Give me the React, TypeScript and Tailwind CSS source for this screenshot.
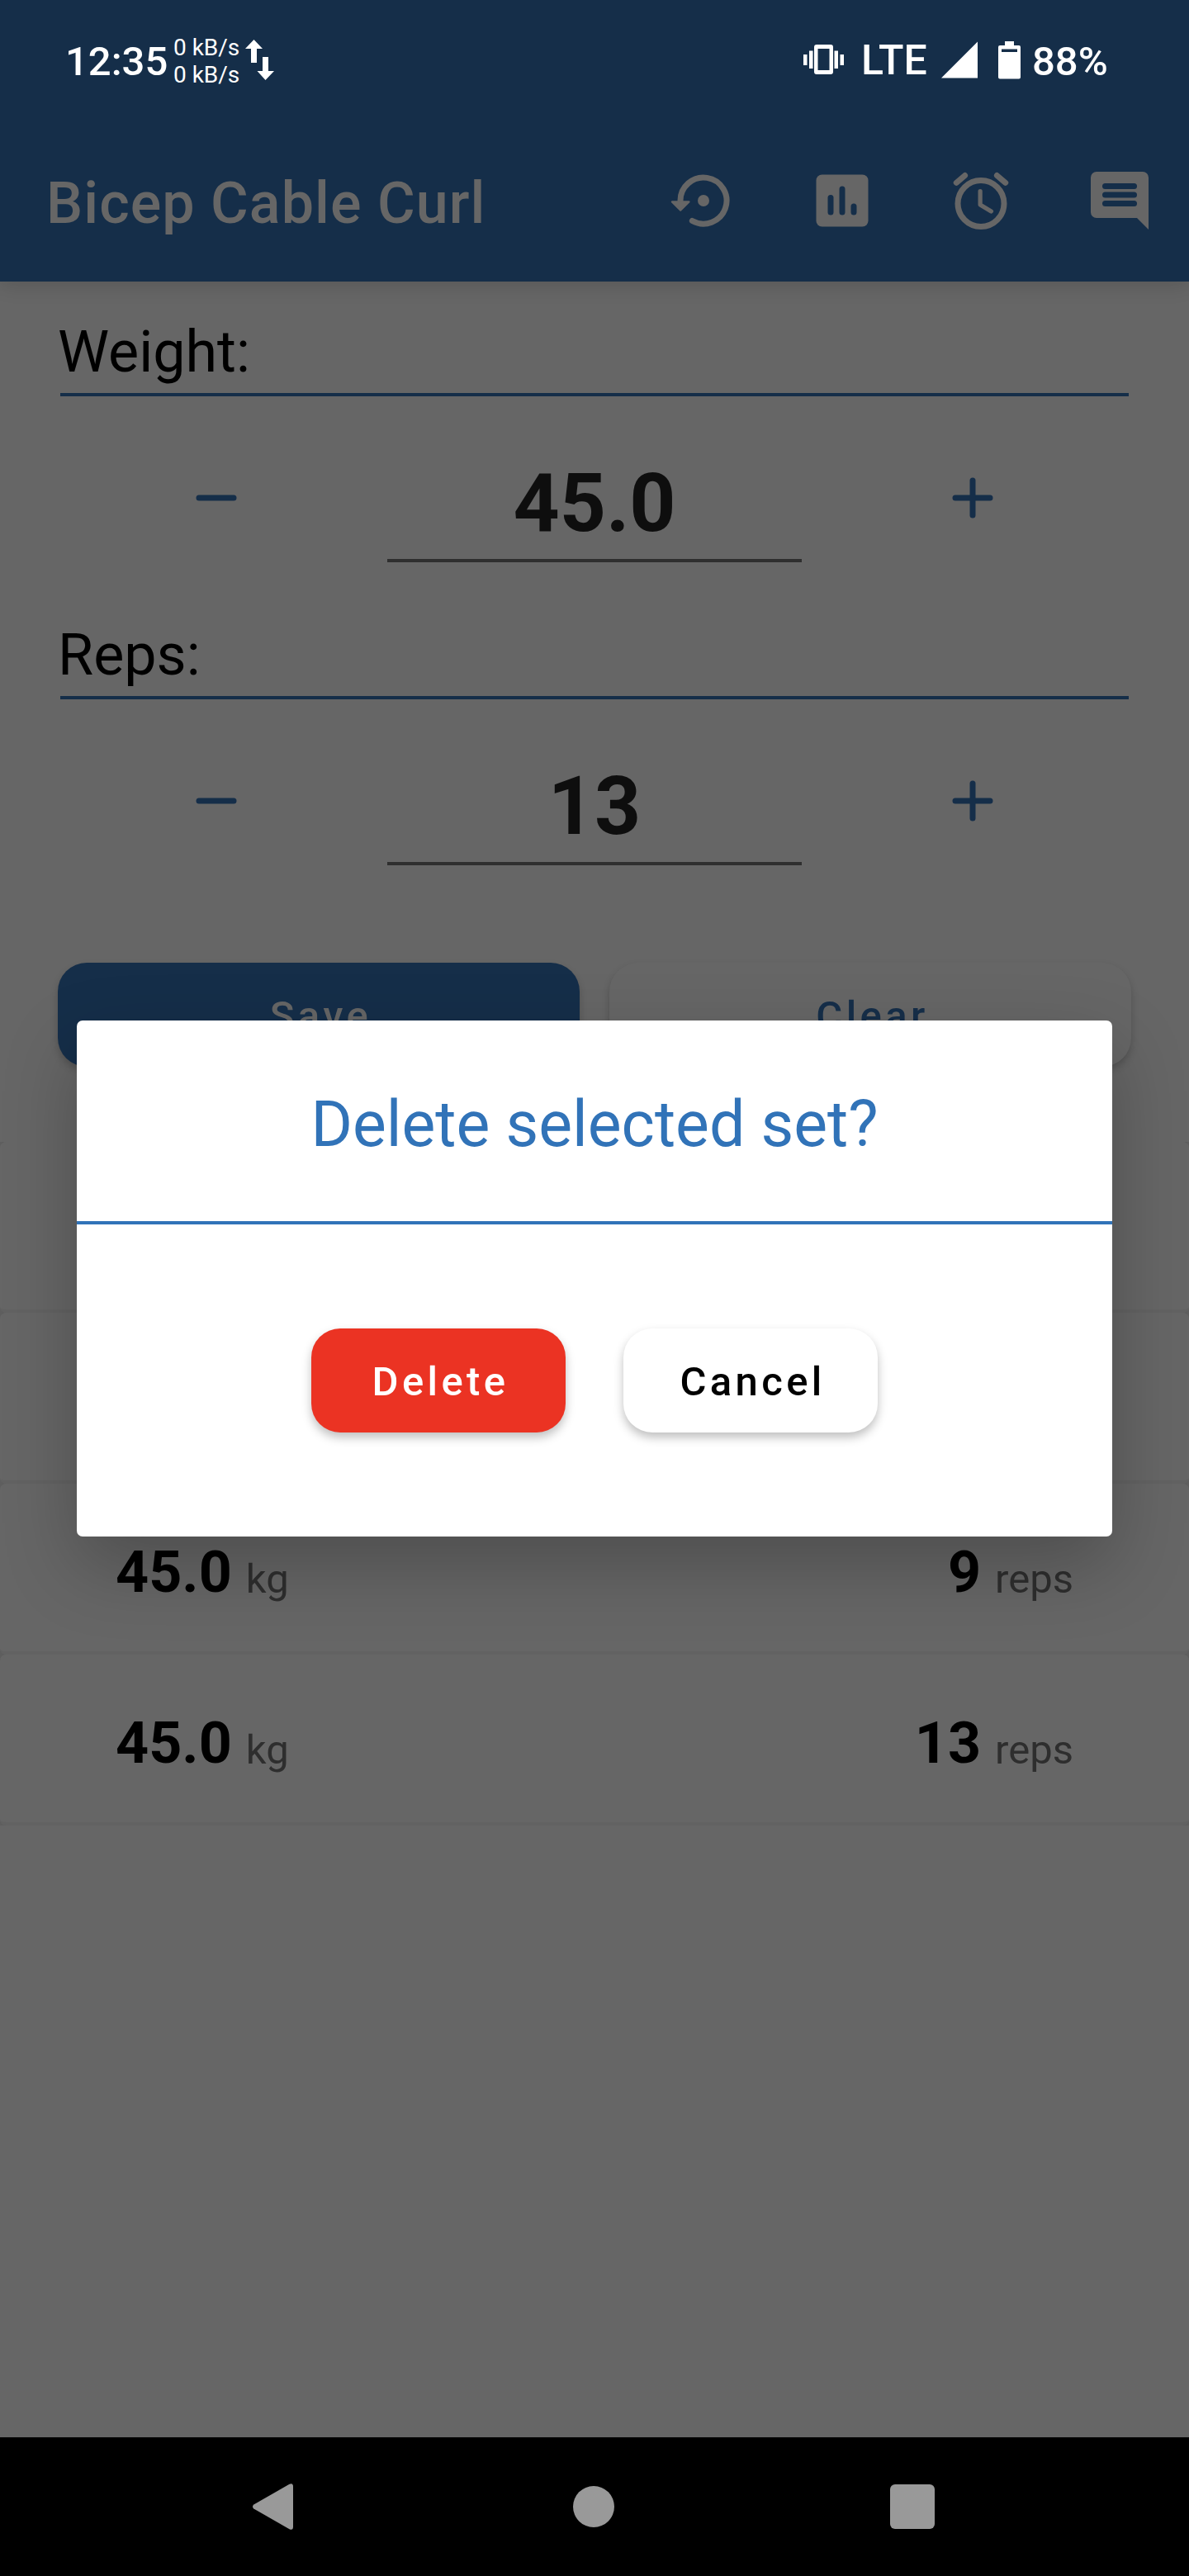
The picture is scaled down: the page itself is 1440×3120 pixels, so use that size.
import React from 'react';

function StatusBar() {
  return (
    <div className="flex h-[145px] shrink-0 items-start justify-between pr-[97px] pl-[79px] text-white">
      <div className="flex items-start">
        <div className="mt-[47px] w-[130px] text-[49px] leading-[56px] font-medium whitespace-nowrap">12:35</div>
        <div className="mt-[41px] w-[88px] pl-px text-[28px] leading-[33px] whitespace-nowrap">
          <div>0 kB/s</div>
          <div>0 kB/s</div>
        </div>
        <svg className="mt-[48px] h-[49px] w-[36px]" viewBox="0 0 36 49" fill="currentColor">
          <path d="M10.5 0 21 11h-7v17H7V11H0z" />
          <path d="M21 21h7v17h7L24.5 49 14.500 38H21z" />
        </svg>
      </div>
      <div className="flex items-start">
        <svg className="mt-[54px] h-[36px] w-[50px]" viewBox="0 0 50 36" fill="currentColor">
          <rect x="0" y="12" width="4.500" height="13" />
          <rect x="7" y="7.500" width="4.500" height="21.500" />
          <path
            fillRule="evenodd"
            d="M16 0h17a3 3 0 0 1 3 3v30a3 3 0 0 1-3 3H16a3 3 0 0 1-3-3V3a3 3 0 0 1 3-3zm1.500 5v26h14V5z"
          />
          <rect x="37.500" y="7.500" width="4.500" height="21.500" />
          <rect x="44.500" y="12" width="4.500" height="13" />
        </svg>
        <div className="mt-[45px] ml-[20px] w-[97px] text-[50px] leading-[56px] font-medium">LTE</div>
        <svg className="mt-[50px] h-[45px] w-[45px]" viewBox="0 0 45 45" fill="currentColor">
          <path d="M0 44.500 44 .5v44z" />
        </svg>
        <svg className="mt-[50px] ml-[24px] h-[46px] w-[27px]" viewBox="0 0 27 46" fill="currentColor">
          <path
            fillRule="evenodd"
            d="M8 0h11v5h6a2 2 0 0 1 2 2v36.500a2 2 0 0 1-2 2H2a2 2 0 0 1-2-2V7a2 2 0 0 1 2-2h6zM4 9.500V13h19V9.500z"
          />
        </svg>
        <div className="mt-[47px] ml-[14px] w-[93px] text-[49px] leading-[56px] font-medium whitespace-nowrap">88%</div>
      </div>
    </div>
  );
}

const icon = 'h-[84px] w-[84px]';

function Toolbar() {
  return (
    <div className="flex h-[196px] shrink-0 items-start justify-between pt-[56px] pr-[42px] pl-[56px] text-[#666666]">
      <h1 className="mt-[4px] text-[70px] leading-[82px] font-medium tracking-[1.05px] whitespace-nowrap">Bicep Cable Curl</h1>
      <div className="flex gap-[84px]">
        <svg className={icon} viewBox="0 0 24 24" fill="none" stroke="currentColor">
          <path d="M4 12.200a8 8 0 1 1 4.100 6.800" strokeWidth="2" strokeLinecap="round" />
          <path d="M1.100 12.400h5.900L4.050 15.350z" fill="currentColor" strokeWidth=".6" strokeLinejoin="round" />
          <circle cx="12" cy="12" r="2" fill="currentColor" stroke="none" />
        </svg>
        <svg className={icon} viewBox="0 0 24 24" fill="currentColor">
          <rect x="3" y="3" width="18" height="18" rx="2" />
          <g className="text-[#152e49]">
            <rect x="7" y="10" width="2" height="7" rx="1" />
            <rect x="11" y="7" width="2" height="10" rx="1" />
            <rect x="15" y="13" width="2" height="4" rx="1" />
          </g>
        </svg>
        <svg className={icon} viewBox="0 0 24 24" fill="none" stroke="currentColor" strokeLinecap="round">
          <circle cx="12" cy="13" r="8" strokeWidth="2" />
          <path d="M3.500 5.800 6.450 3.300M20.500 5.800l-2.950-2.500" strokeWidth="2" />
          <path d="M11.750 8.750v4.700l3.800 2.250" strokeWidth="1.500" strokeLinejoin="round" />
        </svg>
        <svg className={icon} viewBox="0 0 24 24" fill="currentColor">
          <path d="M4 2h16a2 2 0 0 1 2 2v18l-4-4H4a2 2 0 0 1-2-2V4a2 2 0 0 1 2-2z" />
          <g className="text-[#152e49]">
            <rect x="6" y="6" width="12" height="2" rx="1" />
            <rect x="6" y="9" width="12" height="2" rx="1" />
            <rect x="6" y="12" width="12" height="2" rx="1" />
          </g>
        </svg>
      </div>
    </div>
  );
}

function Stepper({ label, value }: { label: string; value: string }) {
  return (
    <section className="h-[367px] shrink-0 pt-[44px]">
      <div className="mr-[73px] ml-[73px] h-[95px] border-b-4 border-[#152e49]">
        <div className="-ml-[3px] text-[70px] leading-[82px] text-black">{label}</div>
      </div>
      <div className="flex h-[201px] items-start justify-between px-[220px] text-[#152e49]">
        <svg className="mt-[81px] h-[84px] w-[84px]" viewBox="0 0 24 24" fill="currentColor">
          <rect x="5" y="11" width="14" height="2" rx="1" />
        </svg>
        <div className="mt-[72px] h-[129px] w-[502px] border-b-[4px] border-[#2f2f2f] text-center text-[98px] leading-[115px] font-bold text-[#0e0e0e]">
          {value}
        </div>
        <svg className="mt-[81px] h-[84px] w-[84px]" viewBox="0 0 24 24" fill="currentColor">
          <rect x="5" y="11" width="14" height="2" rx="1" />
          <rect x="11" y="5" width="2" height="14" rx="1" />
        </svg>
      </div>
    </section>
  );
}

function SetCard({ weight, reps }: { weight?: string; reps?: string }) {
  return (
    <li className="flex h-[207px] items-baseline justify-between rounded-[7px] border-b-4 border-[#626262] bg-[#666666] px-[140px] pt-[66px] text-[70px] leading-[82px] font-bold text-black">
      {weight && (
        <>
          <span>
            {weight}
            <span className="relative top-px ml-[17px] text-[49px] font-normal text-[#2e2e2e]">kg</span>
          </span>
          <span>
            {reps}
            <span className="relative top-px ml-[17px] text-[49px] font-normal text-[#2e2e2e]">reps</span>
          </span>
        </>
      )}
    </li>
  );
}

function NavigationBar() {
  return (
    <div className="flex h-[168px] shrink-0 items-center justify-between bg-black pr-[308px] pl-[306px] text-[#999999]">
      <svg className="h-[56px] w-[54px]" viewBox="0 0 54 56" fill="currentColor">
        <path d="M1.300 25.500 44.500.8q4.500-2 4.500 3v48.400q0 5-4.500 3L1.300 30.500q-2.600-2.500 0-5z" />
      </svg>
      <div className="h-[50px] w-[50px] rounded-full bg-[#999999]" />
      <div className="h-[54px] w-[54px] rounded-[6px] bg-[#999999]" />
    </div>
  );
}

const button =
  'flex h-[126px] items-center justify-center rounded-[35px] pt-[4px] pl-[5px] text-[49px] leading-[56px] font-medium tracking-[4.375px]';

export default function App() {
  return (
    <div className="relative flex h-[3120px] w-[1440px] flex-col overflow-hidden bg-[#666666] font-['Roboto',sans-serif]">
      <header className="z-0 shrink-0 bg-[#152e49] shadow-[0_5px_22px_rgba(0,0,0,0.14)]">
        <StatusBar />
        <Toolbar />
      </header>

      <main className="flex grow flex-col">
        <Stepper label="Weight:" value="45.0" />
        <Stepper label="Reps:" value="13" />
        <div className="mt-[91px] grid shrink-0 grid-cols-2 gap-[36px] px-[70px]">
          <button className={`${button} bg-[#152e49] text-[#666666] shadow-[0_5px_10px_rgba(0,0,0,0.2)]`}>Save</button>
          <button className={`${button} bg-[#666666] text-[#152e49] shadow-[0_5px_10px_rgba(0,0,0,0.2)]`}>Clear</button>
        </div>
        <ul className="mt-[91px] shrink-0 bg-[#5e5e5e]">
          <SetCard />
          <SetCard />
          <SetCard weight="45.0" reps="9" />
          <SetCard weight="45.0" reps="13" />
        </ul>
      </main>

      <NavigationBar />

      <div
        role="dialog"
        className="absolute top-[1236px] left-[93px] flex h-[625px] w-[1254px] flex-col rounded-[7px] bg-white shadow-[0_35px_90px_rgba(0,0,0,0.24)]"
      >
        <h2 className="h-[247px] border-b-4 border-[#3173b8] pt-[81px] text-center text-[77px] leading-[90px] text-[#3173b8]">
          Delete selected set?
        </h2>
        <div className="mt-[126px] flex justify-center gap-[70px]">
          <button className={`${button} w-[308px] bg-[#eb3323] text-white shadow-[0_6px_12px_rgba(0,0,0,0.25)]`}>
            Delete
          </button>
          <button className={`${button} w-[308px] bg-white text-black shadow-[0_6px_12px_rgba(0,0,0,0.25)]`}>
            Cancel
          </button>
        </div>
      </div>
    </div>
  );
}
